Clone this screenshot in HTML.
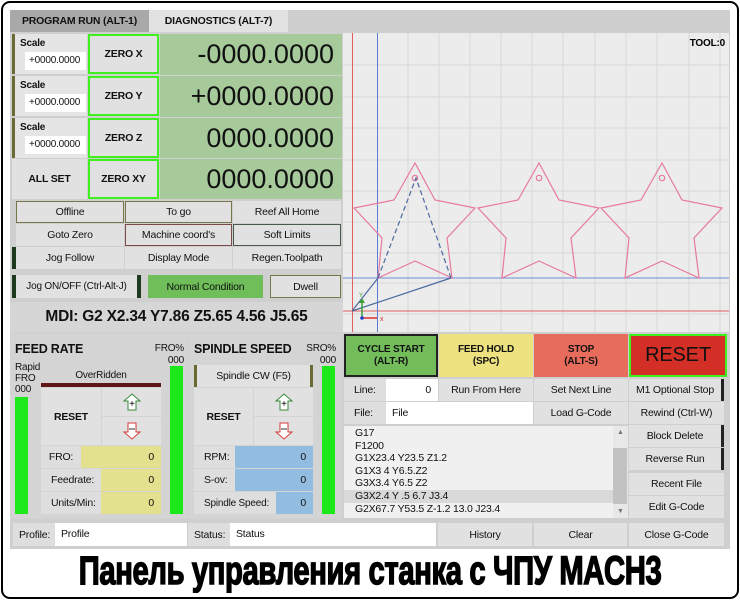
<!DOCTYPE html><html><head><meta charset="utf-8"><style>
*{box-sizing:border-box;margin:0;padding:0}
body{width:740px;height:600px;background:#fff;font-family:"Liberation Sans",sans-serif;position:relative;overflow:hidden;font-size:10.5px;color:#111;letter-spacing:-0.2px}
.a{position:absolute}
.frame{left:1px;top:1px;width:738px;height:598px;border:2px solid #000;border-radius:9px}
.panel{left:10px;top:10px;width:720px;height:539px;background:#cfcfcf}
.btn{position:absolute;background:#e1e1e1;display:flex;align-items:center;justify-content:center;text-align:center;font-size:10.5px;white-space:nowrap}
.c{display:flex;align-items:center;justify-content:center;text-align:center}
.dro{position:absolute;left:160px;width:182px;background:#a7ca9b;font-size:27px;text-align:right;padding-right:8px;display:flex;align-items:center;justify-content:flex-end;letter-spacing:0}
.zero{position:absolute;left:88px;width:71px;background:#e1e1e1;border:2px solid #3ef01e;font-weight:bold;font-size:10.5px;display:flex;align-items:center;justify-content:center}
.scale{position:absolute;left:12px;width:75px;background:#e5e5e5;border-left:3px solid #6b6a32}
.scale b{position:absolute;left:5px;top:4px;font-size:10px}
.scale span{position:absolute;left:10px;top:18px;width:61px;height:18px;background:#fff;font-size:10px;padding-left:4px;line-height:18px}
.lbl{position:absolute;background:#dedede;display:flex;align-items:center;padding-left:6px;font-size:10.5px;white-space:nowrap}
.val{position:absolute;display:flex;align-items:center;justify-content:flex-end;padding-right:7px;font-size:10.5px}
.g{position:absolute;font-size:10.5px;left:355px}
</style></head><body>
<div class="a frame"></div>
<div class="a panel"></div>
<div class="a c" style="left:10px;top:10px;width:139px;height:22px;background:#a9a9a9;font-weight:bold;font-size:10.5px">PROGRAM RUN (ALT-1)</div>
<div class="a c" style="left:149px;top:10px;width:139px;height:22px;background:#e2e2e2;font-weight:bold;font-size:10.5px">DIAGNOSTICS (ALT-7)</div>
<div class="scale" style="top:34px;height:40px"><b>Scale</b><span>+0000.0000</span></div>
<div class="scale" style="top:76px;height:40px"><b>Scale</b><span>+0000.0000</span></div>
<div class="scale" style="top:118px;height:40px"><b>Scale</b><span>+0000.0000</span></div>
<div class="a c" style="left:12px;top:159px;width:75px;height:40px;background:#e1e1e1;font-weight:bold">ALL SET</div>
<div class="zero" style="top:34px;height:40px">ZERO X</div>
<div class="zero" style="top:76px;height:40px">ZERO Y</div>
<div class="zero" style="top:118px;height:40px">ZERO Z</div>
<div class="zero" style="top:159px;height:40px">ZERO XY</div>
<div class="dro" style="top:34px;height:41px">-0000.0000</div>
<div class="dro" style="top:76px;height:41px">+0000.0000</div>
<div class="dro" style="top:118px;height:40px">0000.0000</div>
<div class="dro" style="top:159px;height:40px">0000.0000</div>
<div class="btn" style="left:16px;top:201px;width:108px;height:22px;border:1px solid #77754a">Offline</div>
<div class="btn" style="left:125px;top:201px;width:107px;height:22px;border:1px solid #77754a">To go</div>
<div class="btn" style="left:233px;top:201px;width:108px;height:22px">Reef All Home</div>
<div class="btn" style="left:16px;top:224px;width:108px;height:22px">Goto Zero</div>
<div class="btn" style="left:125px;top:224px;width:107px;height:22px;border:1px solid #7a4a4a">Machine coord's</div>
<div class="btn" style="left:233px;top:224px;width:108px;height:22px;border:1px solid #4a5a4a">Soft Limits</div>
<div class="btn" style="left:12px;top:247px;width:112px;height:22px;border-left:4px solid #1e3a1e">Jog Follow</div>
<div class="btn" style="left:125px;top:247px;width:107px;height:22px">Display Mode</div>
<div class="btn" style="left:233px;top:247px;width:108px;height:22px">Regen.Toolpath</div>
<div class="btn" style="left:12px;top:275px;width:129px;height:23px;border-left:4px solid #1e3a1e;border-right:4px solid #1e3a1e;font-size:10px">Jog ON/OFF (Ctrl-Alt-J)</div>
<div class="btn" style="left:148px;top:275px;width:115px;height:23px;background:#6fbe59">Normal Condition</div>
<div class="btn" style="left:270px;top:275px;width:71px;height:23px;border:1px solid #77754a">Dwell</div>
<div class="a c" style="left:10px;top:302px;width:333px;height:30px;background:#d6d6d6;font-weight:bold;font-size:15.5px">MDI: G2 X2.34 Y7.86 Z5.65 4.56 J5.65</div>
<div class="a" style="left:10px;top:333px;width:177px;height:186px;background:#d4d4d4"></div>
<div class="a" style="left:188px;top:333px;width:154px;height:186px;background:#d4d4d4"></div>
<div class="a" style="left:15px;top:342px;font-weight:bold;font-size:12.5px">FEED RATE</div>
<div class="a" style="left:152px;top:343px;font-size:10px;text-align:right;width:32px;line-height:12px">FRO%<br>000</div>
<div class="a" style="left:15px;top:362px;font-size:10px;line-height:11px">Rapid<br>FRO<br>000</div>
<div class="a" style="left:15px;top:397px;width:13px;height:117px;background:#1de81b"></div>
<div class="a" style="left:170px;top:366px;width:13px;height:148px;background:#1de81b"></div>
<div class="a c" style="left:41px;top:367px;width:120px;height:16px;font-size:10px">OverRidden</div>
<div class="a" style="left:41px;top:383px;width:120px;height:4px;background:#5e1515"></div>
<div class="btn" style="left:41px;top:388px;width:60px;height:57px;font-weight:bold">RESET</div>
<div class="btn" style="left:102px;top:388px;width:59px;height:28px"><svg width="20" height="18"><path d="M10 1 L18 8 H14 V17 H6 V8 H2 Z" fill="#fff" stroke="#3a8a3a"/><text x="10" y="14" font-size="10" text-anchor="middle" font-family="Liberation Sans">+</text></svg></div>
<div class="btn" style="left:102px;top:417px;width:59px;height:28px"><svg width="20" height="18"><path d="M6 1 H14 V10 H18 L10 17 L2 10 H6 Z" fill="#fff" stroke="#d23a3a"/><path d="M7 7 H13" stroke="#333"/></svg></div>
<div class="lbl" style="left:41px;top:446px;width:40px;height:22px;justify-content:center;padding:0">FRO:</div>
<div class="val" style="left:81px;top:446px;width:80px;height:22px;background:#e3e08e">0</div>
<div class="lbl" style="left:41px;top:469px;width:60px;height:22px;padding-left:10px">Feedrate:</div>
<div class="val" style="left:101px;top:469px;width:60px;height:22px;background:#e3e08e">0</div>
<div class="lbl" style="left:41px;top:492px;width:60px;height:22px;padding-left:10px">Units/Min:</div>
<div class="val" style="left:101px;top:492px;width:60px;height:22px;background:#e3e08e">0</div>
<div class="a" style="left:194px;top:342px;font-weight:bold;font-size:12.5px">SPINDLE SPEED</div>
<div class="a" style="left:302px;top:343px;font-size:10px;text-align:right;width:34px;line-height:12px">SRO%<br>000</div>
<div class="a" style="left:322px;top:366px;width:13px;height:148px;background:#1de81b"></div>
<div class="btn" style="left:194px;top:365px;width:119px;height:22px;border-left:3px solid #6b6a32;border-right:3px solid #6b6a32">Spindle CW (F5)</div>
<div class="btn" style="left:194px;top:388px;width:59px;height:57px;font-weight:bold">RESET</div>
<div class="btn" style="left:254px;top:388px;width:59px;height:28px"><svg width="20" height="18"><path d="M10 1 L18 8 H14 V17 H6 V8 H2 Z" fill="#fff" stroke="#3a8a3a"/><text x="10" y="14" font-size="10" text-anchor="middle" font-family="Liberation Sans">+</text></svg></div>
<div class="btn" style="left:254px;top:417px;width:59px;height:28px"><svg width="20" height="18"><path d="M6 1 H14 V10 H18 L10 17 L2 10 H6 Z" fill="#fff" stroke="#d23a3a"/><path d="M7 7 H13" stroke="#333"/></svg></div>
<div class="lbl" style="left:194px;top:446px;width:41px;height:22px;padding-left:10px">RPM:</div>
<div class="val" style="left:235px;top:446px;width:78px;height:22px;background:#93bde0">0</div>
<div class="lbl" style="left:194px;top:469px;width:41px;height:22px;padding-left:10px">S-ov:</div>
<div class="val" style="left:235px;top:469px;width:78px;height:22px;background:#93bde0">0</div>
<div class="lbl" style="left:194px;top:492px;width:82px;height:22px;padding-left:10px;font-size:10px">Spindle Speed:</div>
<div class="val" style="left:276px;top:492px;width:37px;height:22px;background:#93bde0">0</div>
<div class="lbl" style="left:13px;top:523px;width:42px;height:23px">Profile:</div>
<div class="a" style="left:55px;top:523px;width:132px;height:23px;background:#fff;padding-left:6px;line-height:23px">Profile</div>
<div class="lbl" style="left:188px;top:523px;width:42px;height:23px">Status:</div>
<div class="a" style="left:230px;top:523px;width:206px;height:23px;background:#fff;padding-left:6px;line-height:23px">Status</div>
<div class="btn" style="left:438px;top:523px;width:94px;height:23px">History</div>
<div class="btn" style="left:534px;top:523px;width:93px;height:23px">Clear</div>
<div class="btn" style="left:629px;top:523px;width:95px;height:23px">Close G-Code</div>
<div class="a" style="left:343px;top:33px;width:386px;height:299px;background:#ececec"></div>
<svg class="a" style="left:0;top:0" width="740" height="340">
<g stroke="#dedede" stroke-width="1.5">
<path d="M408 33V332M439 33V332M470 33V332M501 33V332M532 33V332M563 33V332M595 33V332M626 33V332M657 33V332M689 33V332M720 33V332"/>
<path d="M343 65H729M343 97H729M343 128H729M343 160H729M343 191H729M343 222H729M343 253H729M343 283H729M343 314H729"/>
</g>
<path d="M352.5 33V332" stroke="#e26060"/>
<path d="M343 311H729" stroke="#e26060"/>
<path d="M377.5 33V332" stroke="#5a7fd0"/>
<path d="M343 278H729" stroke="#6a8fd8"/>
<g fill="none" stroke="#e8799c" stroke-width="1.2">
<path d="M415 163L394 200L354 208L382 238L378 278L415 261L452 278L447 238L475 208L435 200Z"/>
<circle cx="415" cy="178" r="2.7"/>
<path transform="translate(124 0)" d="M415 163L394 200L354 208L382 238L378 278L415 261L452 278L447 238L475 208L435 200Z"/>
<circle cx="539" cy="178" r="2.7"/>
<path transform="translate(247 0)" d="M415 163L394 200L354 208L382 238L378 278L415 261L452 278L447 238L475 208L435 200Z"/>
<circle cx="662" cy="178" r="2.7"/>
</g>
<path d="M378 278L416 178L451 278" fill="none" stroke="#4a6aa0" stroke-width="1.2" stroke-dasharray="5 3"/>
<path d="M352 311L378 278M352 311L451 278" stroke="#4a6aa0" stroke-width="1.2"/>
<path d="M362 318V300" stroke="#3aa03a" stroke-width="1.5"/><path d="M359 303L362 298L365 303Z" fill="#3aa03a"/>
<path d="M362 318H377" stroke="#e03030" stroke-width="1.5"/><circle cx="362" cy="318" r="1.8" fill="#2040d0"/>
<text x="380" y="321" font-size="7" fill="#e03030" font-family="Liberation Sans">x</text>
<text x="359" y="297" font-size="6" fill="#3aa03a" font-family="Liberation Sans">Y</text>
<text x="725" y="46" font-size="10" font-weight="bold" text-anchor="end" font-family="Liberation Sans">TOOL:0</text>
</svg>
<div class="a c" style="left:344px;top:334px;width:94px;height:43px;background:#72bd5a;border:2px solid #222;font-weight:bold;font-size:10px;line-height:12px">CYCLE START<br>(ALT-R)</div>
<div class="a c" style="left:439px;top:334px;width:94px;height:43px;background:#ede27f;font-weight:bold;font-size:10px;line-height:12px">FEED HOLD<br>(SPC)</div>
<div class="a c" style="left:534px;top:334px;width:94px;height:43px;background:#e86c5c;font-weight:bold;font-size:10px;line-height:12px">STOP<br>(ALT-S)</div>
<div class="a c" style="left:629px;top:334px;width:98px;height:43px;background:#d42f27;border:2px solid #3ef01e;font-size:20px">RESET</div>
<div class="lbl" style="left:344px;top:379px;width:42px;height:22px;padding-left:10px">Line:</div>
<div class="val" style="left:386px;top:379px;width:52px;height:22px;background:#fff">0</div>
<div class="btn" style="left:439px;top:379px;width:94px;height:22px">Run From Here</div>
<div class="btn" style="left:534px;top:379px;width:94px;height:22px">Set Next Line</div>
<div class="btn" style="left:629px;top:379px;width:95px;height:22px;border-right:3px solid #222">M1 Optional Stop</div>
<div class="lbl" style="left:344px;top:402px;width:42px;height:22px;padding-left:10px">File:</div>
<div class="a" style="left:386px;top:402px;width:147px;height:22px;background:#fff;padding-left:6px;line-height:22px">File</div>
<div class="btn" style="left:534px;top:402px;width:94px;height:22px">Load G-Code</div>
<div class="btn" style="left:629px;top:402px;width:95px;height:22px">Rewind (Ctrl-W)</div>
<div class="a" style="left:344px;top:426px;width:284px;height:92px;background:#f0f0f0"></div>
<div class="a" style="left:344px;top:490px;width:269px;height:13px;background:#d9d9d9"></div>
<div class="a" style="left:613px;top:426px;width:15px;height:92px;background:#e8e8e8"></div>
<div class="a" style="left:613px;top:448px;width:14px;height:56px;background:#c2c2c2"></div>
<div class="a" style="left:617px;top:429px;font-size:7px;color:#777">▲</div>
<div class="a" style="left:617px;top:508px;font-size:7px;color:#777">▼</div>
<div class="g" style="top:427px">G17</div>
<div class="g" style="top:440px">F1200</div>
<div class="g" style="top:452px">G1X23.4 Y23.5 Z1.2</div>
<div class="g" style="top:465px">G1X3 4 Y6.5.Z2</div>
<div class="g" style="top:477px">G3X3.4 Y6.5 Z2</div>
<div class="g" style="top:490px">G3X2.4 Y .5 6.7 J3.4</div>
<div class="g" style="top:503px">G2X67.7 Y53.5 Z-1.2 13.0 J23.4</div>
<div class="btn" style="left:629px;top:425px;width:95px;height:22px;border-right:3px solid #222">Block Delete</div>
<div class="btn" style="left:629px;top:448px;width:95px;height:22px;border-right:3px solid #222">Reverse Run</div>
<div class="btn" style="left:629px;top:473px;width:95px;height:22px">Recent File</div>
<div class="btn" style="left:629px;top:496px;width:95px;height:22px">Edit G-Code</div>
<div class="a c" style="left:0;top:549px;width:740px;height:44px"><span style="font-family:'Liberation Sans Narrow','Liberation Sans',sans-serif;font-weight:bold;font-size:40px;color:#000;-webkit-text-stroke:1.5px #000;display:inline-block;transform:scaleX(0.73);white-space:nowrap;letter-spacing:-0.5px">Панель управления станка с ЧПУ MACH3</span></div>
</body></html>
